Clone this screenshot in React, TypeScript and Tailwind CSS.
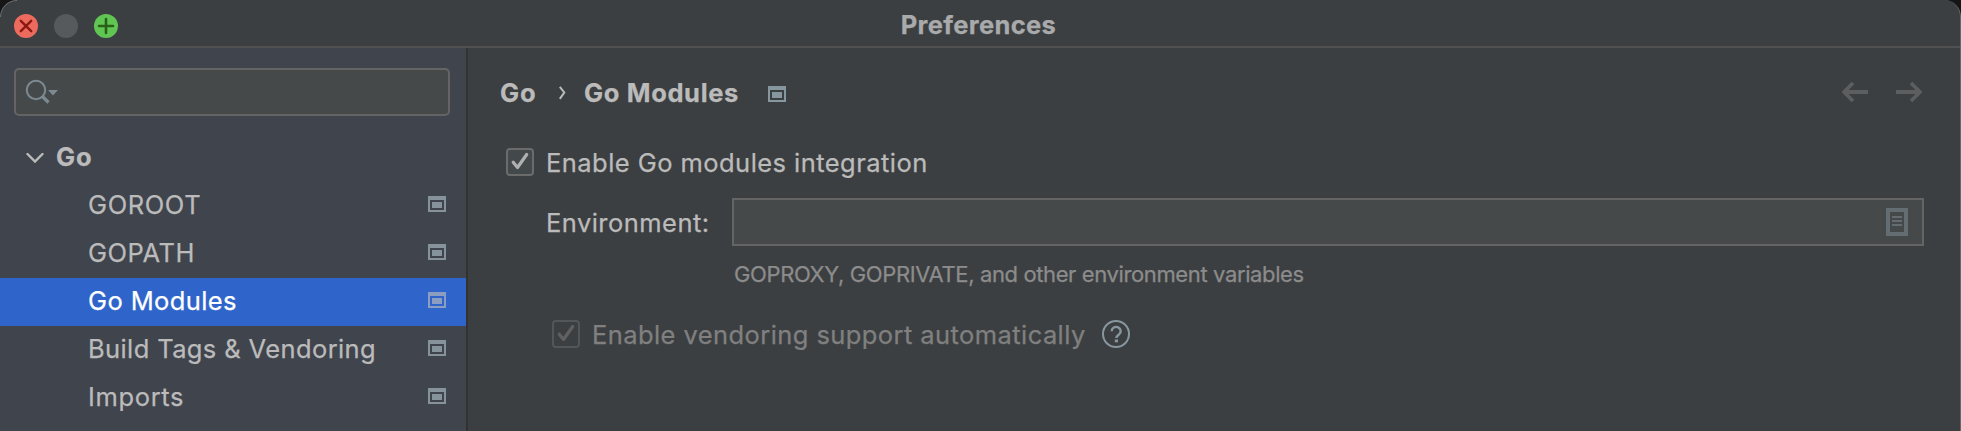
import type { ReactNode } from "react";

function ProjectIcon({ className = "text-[#87939a]" }: { className?: string }) {
  return (
    <svg width="18" height="16" viewBox="0 0 18 16" className={`shrink-0 ${className}`} fill="currentColor" shapeRendering="crispEdges">
      <path fillRule="evenodd" d="M0 0h18v16H0zM2 4v10h14V4z" />
      <path d="M4 6h10v6H4z" />
    </svg>
  );
}

function TreeItem({ children, className, selected = false }: { children: ReactNode; className: string; selected?: boolean }) {
  return (
    <div className={`flex h-12 items-center justify-between pl-[88px] pr-5 ${selected ? "bg-[#2f65ca] text-white" : ""}`}>
      <span className={`pb-[3px] leading-8 ${className}`}>{children}</span>
      <ProjectIcon className={selected ? "mb-1 text-[#8b9dc0]" : "mb-1 text-[#87939a]"} />
    </div>
  );
}

function CheckBox({ disabled = false }: { disabled?: boolean }) {
  return (
    <svg width="28" height="28" viewBox="0 0 28 28" className="shrink-0" fill="none">
      <rect x="1" y="1" width="26" height="26" rx="3" fill={disabled ? "none" : "#43494a"} stroke={disabled ? "#545556" : "#6b6b6b"} strokeWidth="2" />
      <path d="M7.200 14.200l4.300 5.300 9.200-13" stroke={disabled ? "#606060" : "#b0b0b0"} strokeWidth="3.200" strokeLinecap="round" strokeLinejoin="round" />
    </svg>
  );
}

function TitleBar() {
  return (
    <header className="relative flex h-12 shrink-0 items-center justify-center border-b-2 border-[#515151] bg-[#3c3f41]">
      <div className="absolute left-3.5 top-3.5 flex gap-4">
        <svg width="24" height="24" viewBox="0 0 24 24">
          <circle cx="12" cy="12" r="12" fill="#ed6a5e" />
          <path d="M6.800 6.800l10.400 10.400M17.200 6.800L6.800 17.200" stroke="#8c1a10" strokeWidth="2.400" strokeLinecap="round" />
        </svg>
        <svg width="24" height="24" viewBox="0 0 24 24">
          <circle cx="12" cy="12" r="12" fill="#565a5c" />
        </svg>
        <svg width="24" height="24" viewBox="0 0 24 24">
          <circle cx="12" cy="12" r="12" fill="#61c554" />
          <path d="M12 5v14M5 12h14" stroke="#286017" strokeWidth="2.600" strokeLinecap="round" />
        </svg>
      </div>
      <h1 className="pr-[4px] pt-[3px] text-[25.5px] font-bold leading-8 tracking-[0.36px] text-[#a9aaab]">Preferences</h1>
    </header>
  );
}

function Sidebar() {
  return (
    <aside className="flex w-[468px] shrink-0 flex-col border-r-2 border-[#323232] bg-[#40444d] pt-5">
      <div className="ml-3.5 mr-4 flex h-12 shrink-0 items-center rounded-[5px] border-2 border-[#646464] bg-[#45494a] pl-[9px]">
        <svg width="34" height="26" viewBox="0 0 34 26" fill="none" className="text-[#7c8a93]">
          <circle cx="11" cy="11" r="9.200" stroke="currentColor" strokeWidth="2" />
          <path d="M17 17l6.500 6.500" stroke="currentColor" strokeWidth="3.200" />
          <path d="M23 11h10l-5 5.500z" fill="currentColor" />
        </svg>
      </div>
      <div className="mt-[18px] flex h-12 shrink-0 items-center pl-[26px]">
        <svg width="18" height="12" viewBox="0 0 18 12" fill="none" className="mr-[12px]">
          <path d="M1.500 2l7.500 7.500L16.500 2" stroke="#bbbbbb" strokeWidth="2.400" strokeLinecap="round" />
        </svg>
        <span className="pb-[2px] font-bold leading-8 tracking-[0.9px]">Go</span>
      </div>
      <TreeItem className="tracking-[0.6px]">GOROOT</TreeItem>
      <TreeItem className="tracking-[0.54px]">GOPATH</TreeItem>
      <TreeItem selected className="tracking-[0.38px]">Go Modules</TreeItem>
      <TreeItem className="tracking-[0.38px]">Build Tags &amp; Vendoring</TreeItem>
      <TreeItem className="tracking-[0.65px]">Imports</TreeItem>
    </aside>
  );
}

function Breadcrumb() {
  return (
    <div className="flex h-[90px] items-center pl-8 pr-[39px] font-bold">
      <span className="w-[59px] leading-8 tracking-[0.9px]">Go</span>
      <svg width="7" height="14" viewBox="0 0 7 14" fill="none">
        <path d="M0.800 0.800L5.300 6.500L0.800 12.800" stroke="#bbbbbb" strokeWidth="2" />
      </svg>
      <span className="ml-[18px] w-[184px] leading-8 tracking-[0.64px]">Go Modules</span>
      <ProjectIcon className="mt-[2px] text-[#87979f]" />
      <div className="ml-auto flex gap-7 pb-0.5">
        <svg width="26" height="20" viewBox="0 0 26 20" fill="none" stroke="#5d5e5f">
          <path d="M26 10H2" strokeWidth="4" />
          <path d="M11 1L2 10l9 9" strokeWidth="3.600" />
        </svg>
        <svg width="26" height="20" viewBox="0 0 26 20" fill="none" stroke="#5d5e5f">
          <path d="M0 10h24" strokeWidth="4" />
          <path d="M15 1l9 9-9 9" strokeWidth="3.600" />
        </svg>
      </div>
    </div>
  );
}

function EnvironmentField() {
  return (
    <div className="mt-3 flex h-12 items-center pl-[78px] pr-[37px]">
      <label className="w-[186px] pt-[2px] leading-8 tracking-[0.46px]">Environment:</label>
      <div className="flex h-12 flex-1 items-center justify-end border-2 border-[#646464] bg-[#45494a] pr-3.5">
        <svg width="22" height="28" viewBox="0 0 22 28" fill="#646d72" shapeRendering="crispEdges">
          <path fillRule="evenodd" d="M0 0h22v28H0zM4 4v20h14V4z" />
          <path d="M6 8h10v2H6zM6 12h10v2H6zM6 16h10v2H6z" />
        </svg>
      </div>
    </div>
  );
}

export default function App() {
  return (
    <div className="h-[431px] w-full bg-[#161616] font-['Inter','Liberation_Sans',sans-serif] text-[25.5px] text-[#bbbbbb] [-webkit-text-stroke:0.25px]">
      <div className="relative flex h-full flex-col overflow-hidden rounded-t-[17px] bg-[#3c3f41]">
        <TitleBar />
        <div className="flex min-h-0 flex-1">
          <Sidebar />
          <main className="min-w-0 flex-1">
            <Breadcrumb />
            <div className="flex h-12 items-center gap-[12px] pl-[38px]">
              <CheckBox />
              <span className="pt-[2px] leading-8 tracking-[0.45px]">Enable Go modules integration</span>
            </div>
            <EnvironmentField />
            <p className="mt-3 pl-[266px] text-[22px] leading-8 tracking-[-0.38px] text-[#8c8c8c]">
              GOPROXY, GOPRIVATE, and other environment variables
            </p>
            <div className="mt-5 flex h-12 items-center pl-[84px] text-[#808080]">
              <CheckBox disabled />
              <span className="ml-[12px] w-[510px] pt-[2px] leading-8 tracking-[0.42px]">Enable vendoring support automatically</span>
              <svg width="28" height="28" viewBox="0 0 28 28" fill="none" stroke="#87979f">
                <circle cx="14" cy="14" r="13" strokeWidth="2" />
                <path d="M9.700 11.200a4.500 4.200 0 1 1 7.200 3.300c-1.500 1.100-2.500 1.700-2.500 3.500" strokeWidth="2.400" />
                <path d="M12.800 19.500h3.200v2.800h-3.200z" fill="#87979f" stroke="none" />
              </svg>
            </div>
          </main>
        </div>
        <div className="pointer-events-none absolute inset-0 rounded-t-[17px] border-r border-[#66696b]" />
        <svg className="absolute left-0 top-0" width="17" height="17" viewBox="0 0 17 17" fill="none">
          <path d="M0.500 17A16.500 16.500 0 0 1 17 0.500" stroke="#6d7072" />
        </svg>
      </div>
    </div>
  );
}
